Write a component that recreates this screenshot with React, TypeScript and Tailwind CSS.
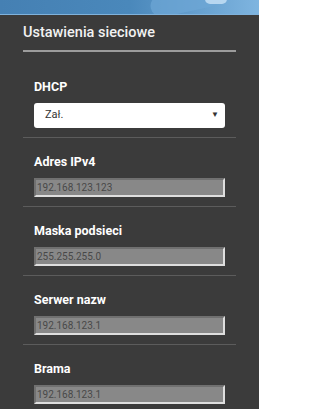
const fields = [
  { label: "Adres IPv4", value: "192.168.123.123" },
  { label: "Maska podsieci", value: "255.255.255.0" },
  { label: "Serwer nazw", value: "192.168.123.1" },
  { label: "Brama", value: "192.168.123.1" },
];

function Banner() {
  return (
    <div className="relative h-[15px] overflow-hidden bg-linear-to-r from-[#4580b3] via-[#4a88bb] to-[#7fb5e0]">
      <div className="absolute left-[150px] top-[-10px] h-[22px] w-[70px] rotate-[-12deg] rounded-full bg-[#6ea6d6] opacity-70" />
      <div className="absolute left-[205px] top-[-6px] h-[10px] w-[22px] rounded-full bg-[#c9e2f6] opacity-80" />
      <div className="absolute inset-x-0 bottom-0 h-px bg-[#7fb2dc]" />
    </div>
  );
}

function Field({ label, value }: { label: string; value: string }) {
  return (
    <div className="border-t border-[#5c5c5c] px-[11px] pt-[17px] pb-[9px]">
      <div className="text-[12.5px] leading-[14px] font-bold text-white">{label}</div>
      <input
        readOnly
        value={value}
        className="mt-[9px] block h-[19px] w-full border-2 border-t-[#707070] border-l-[#707070] border-b-[#dedede] border-r-[#dedede] bg-[#888888] px-[1px] text-[10px] leading-[15px] text-[#484848] outline-none"
      />
    </div>
  );
}

export default function App() {
  return (
    <div className="min-h-[409px] w-[259px] bg-[#3b3b3b] font-['Roboto','Liberation_Sans',sans-serif]">
      <Banner />
      <div className="px-[23px]">
        <h2 className="pt-[9px] text-[14.5px] leading-[18px] font-medium text-[#f2f2f2]">
          Ustawienia sieciowe
        </h2>
        <div className="mt-[8px] h-[1.5px] bg-[#9c9c9c]" />
        <div className="px-[11px] pt-[28px] pb-[9px]">
          <div className="text-[12.5px] leading-[14px] font-bold text-white">DHCP</div>
          <div className="mt-[9px] flex h-[25px] items-center justify-between rounded-[3px] bg-white pr-[6px] pl-[11px]">
            <span className="text-[11px] text-[#333]">Zał.</span>
            <span className="text-[8px] text-[#333]">▼</span>
          </div>
        </div>
        {fields.map((f) => (
          <Field key={f.label} label={f.label} value={f.value} />
        ))}
      </div>
    </div>
  );
}
